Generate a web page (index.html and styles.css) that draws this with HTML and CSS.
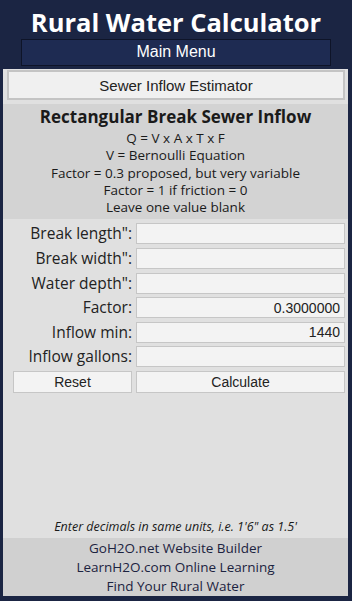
FILE: index.html
```html
<!DOCTYPE html>
<html lang="en">
<head>
  <meta charset="UTF-8">
  <meta name="viewport" content="width=device-width,initial-scale=1.0">
  <title>Rural Water Calculator</title>
  <link rel="stylesheet" href="styles.css">
</head>
<body>
 <div class="page">
  <!-- Header -->
  <div class="top">
    <h1>Rural Water Calculator</h1>
    <div class="menu">Main Menu</div>
  </div>

  <div class="main">
    <button class="tool">Sewer Inflow Estimator</button>

    <div class="intro">
      <h2>Rectangular Break Sewer Inflow</h2>
      <p>Q = V x A x T x F</p>
      <p>V = Bernoulli Equation</p>
      <p>Factor = 0.3 proposed, but very variable</p>
      <p>Factor = 1 if friction = 0</p>
      <p>Leave one value blank</p>
    </div>

    <form class="calc">
      <label for="len">Break length":</label><input id="len" type="text">
      <label for="wid">Break width":</label><input id="wid" type="text">
      <label for="dep">Water depth":</label><input id="dep" type="text">
      <label for="fac">Factor:</label><input id="fac" type="text" value="0.3000000">
      <label for="min">Inflow min:</label><input id="min" type="text" value="1440">
      <label for="gal">Inflow gallons:</label><input id="gal" type="text">
      <button type="reset" class="btn">Reset</button><button type="button" class="btn">Calculate</button>
    </form>

    <p class="note">Enter decimals in same units, i.e. 1'6" as 1.5'</p>

    <div class="links">
      <a href="#">GoH2O.net Website Builder</a>
      <a href="#">LearnH2O.com Online Learning</a>
      <a href="#">Find Your Rural Water</a>
    </div>
  </div>
 </div>
</body>
</html>
```

FILE: styles.css
```css
:root{--navy:#1b2543;--bar:#1e2b52;--bg:#e0e0e0;--box:#d3d3d3;--foot:#d0d0d0;--txt:#1a1a1a;--link:#1c2340}
*{box-sizing:border-box;margin:0;padding:0}
body{background:var(--navy);font-family:'Open Sans','DejaVu Sans',sans-serif;color:var(--txt)}
.page{height:601px;display:flex;flex-direction:column;padding:0 4px 5px 3px}
.top{text-align:center;padding:6px 17px 3px 18px}
.top h1{color:#fff;font-size:25.5px;line-height:33px;font-weight:700}
.menu{background:var(--bar);border:1px solid #0e1428;color:#fff;font:16px/24px 'Liberation Sans',Arial,sans-serif;height:27px}
.main{flex:1;background:var(--bg);display:flex;flex-direction:column}
.tool{margin:1px 3px 0 4px;height:30px;background:#f0f0f0;border:2px solid #c4c4c4;font:15px 'Liberation Sans',Arial,sans-serif;color:#222}
.intro{background:var(--box);margin-top:4px;padding:2px 4px 3px;text-align:center;font-size:13.5px;line-height:17.3px}
.intro h2{font-size:17px;line-height:22px;font-weight:700;margin-bottom:2px}
.calc{display:grid;grid-template-columns:119px 209px;column-gap:4px;row-gap:3.6px;grid-auto-rows:21px;padding:4px 0 0 10px}
.calc label{text-align:right;font-size:15.5px;line-height:21px;color:#222;white-space:nowrap}
.calc input{height:21px;border:1px solid #c6c6c6;background:#f3f3f3;font:14px 'Liberation Sans',Arial,sans-serif;text-align:right;padding:0 4px;color:#222}
.btn{height:22px;border:1px solid #c6c6c6;background:#f3f3f3;font:14px 'Liberation Sans',Arial,sans-serif;color:#222}
.note{margin-top:auto;text-align:center;font-style:italic;font-size:12.5px;line-height:17px;padding-bottom:3px}
.links{background:var(--foot);display:flex;flex-direction:column;align-items:center;padding:1px 0 0}
.links a{color:var(--link);text-decoration:none;font-size:13.5px;line-height:19px}
```
